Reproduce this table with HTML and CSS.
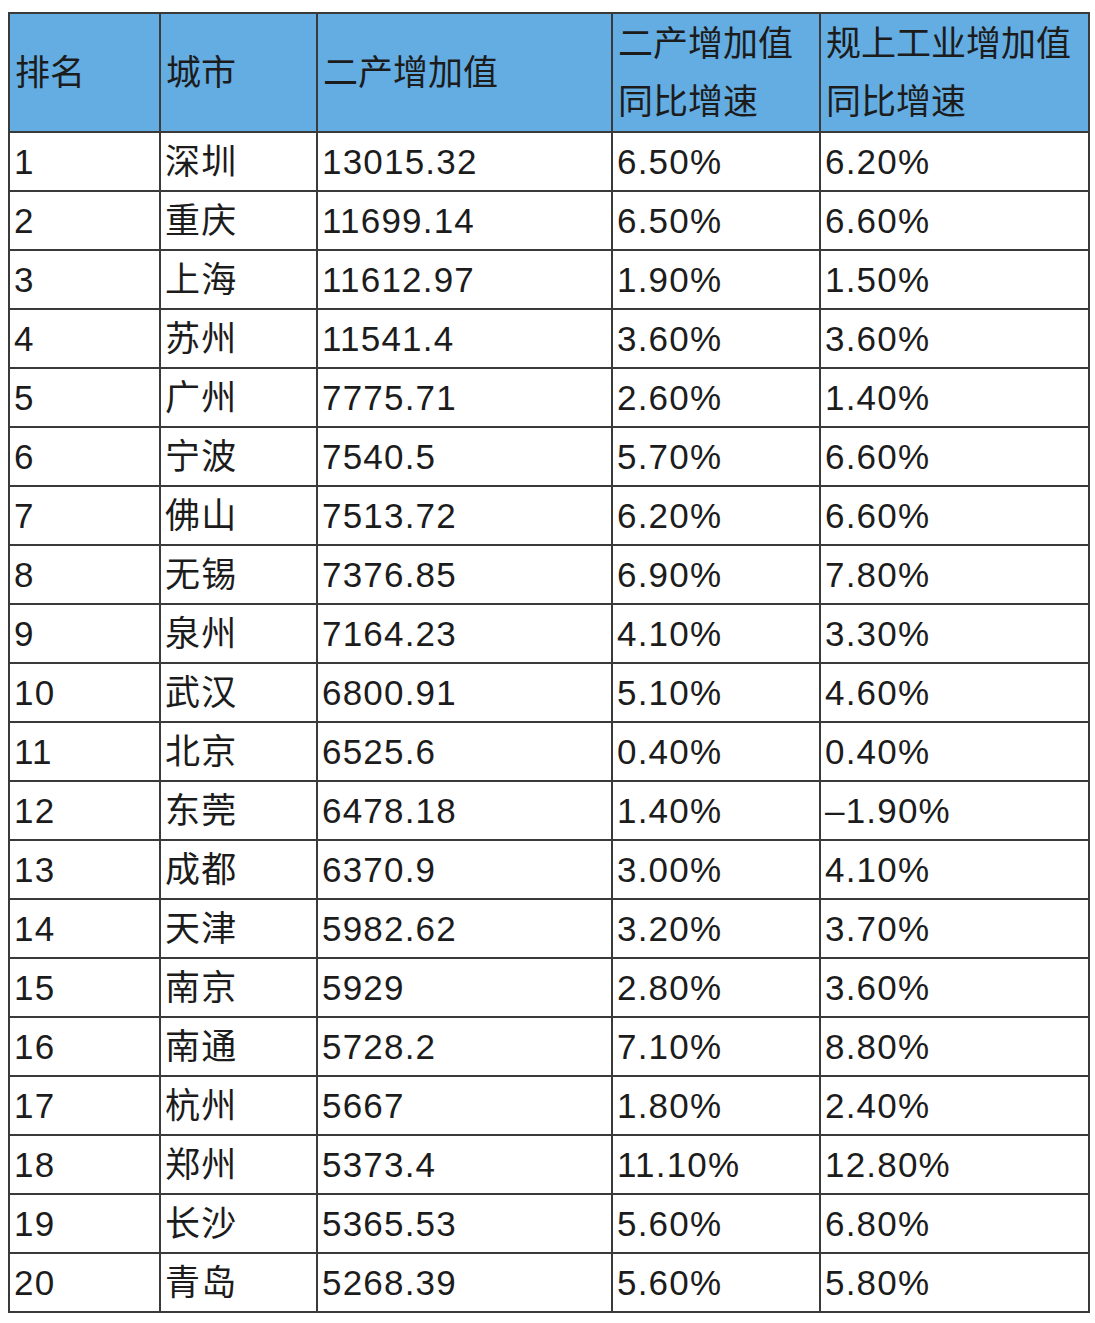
FILE: index.html
```html
<!DOCTYPE html>
<html lang="zh-CN">
<head>
<meta charset="utf-8">
<title>城市二产增加值排名</title>
<link rel="stylesheet" href="styles.css">
</head>
<body>
<table class="rank">
<colgroup>
<col class="c1"><col class="c2"><col class="c3"><col class="c4"><col class="c5">
</colgroup>
<thead>
<tr><th>排名</th><th>城市</th><th>二产增加值</th><th>二产增加值<br>同比增速</th><th>规上工业增加值<br>同比增速</th></tr>
</thead>
<tbody>
<tr><td>1</td><td>深圳</td><td>13015.32</td><td>6.50%</td><td>6.20%</td></tr>
<tr><td>2</td><td>重庆</td><td>11699.14</td><td>6.50%</td><td>6.60%</td></tr>
<tr><td>3</td><td>上海</td><td>11612.97</td><td>1.90%</td><td>1.50%</td></tr>
<tr><td>4</td><td>苏州</td><td>11541.4</td><td>3.60%</td><td>3.60%</td></tr>
<tr><td>5</td><td>广州</td><td>7775.71</td><td>2.60%</td><td>1.40%</td></tr>
<tr><td>6</td><td>宁波</td><td>7540.5</td><td>5.70%</td><td>6.60%</td></tr>
<tr><td>7</td><td>佛山</td><td>7513.72</td><td>6.20%</td><td>6.60%</td></tr>
<tr><td>8</td><td>无锡</td><td>7376.85</td><td>6.90%</td><td>7.80%</td></tr>
<tr><td>9</td><td>泉州</td><td>7164.23</td><td>4.10%</td><td>3.30%</td></tr>
<tr><td>10</td><td>武汉</td><td>6800.91</td><td>5.10%</td><td>4.60%</td></tr>
<tr><td>11</td><td>北京</td><td>6525.6</td><td>0.40%</td><td>0.40%</td></tr>
<tr><td>12</td><td>东莞</td><td>6478.18</td><td>1.40%</td><td>–1.90%</td></tr>
<tr><td>13</td><td>成都</td><td>6370.9</td><td>3.00%</td><td>4.10%</td></tr>
<tr><td>14</td><td>天津</td><td>5982.62</td><td>3.20%</td><td>3.70%</td></tr>
<tr><td>15</td><td>南京</td><td>5929</td><td>2.80%</td><td>3.60%</td></tr>
<tr><td>16</td><td>南通</td><td>5728.2</td><td>7.10%</td><td>8.80%</td></tr>
<tr><td>17</td><td>杭州</td><td>5667</td><td>1.80%</td><td>2.40%</td></tr>
<tr><td>18</td><td>郑州</td><td>5373.4</td><td>11.10%</td><td>12.80%</td></tr>
<tr><td>19</td><td>长沙</td><td>5365.53</td><td>5.60%</td><td>6.80%</td></tr>
<tr><td>20</td><td>青岛</td><td>5268.39</td><td>5.60%</td><td>5.80%</td></tr>
</tbody>
</table>
</body>
</html>
```
FILE: styles.css
```css
html, body {
  background: #ffffff;
}
body {
  margin: 12px 0 0 8px;
  font-family: "Liberation Sans", "Noto Sans CJK SC", sans-serif;
  color: #1c1c1c;
}
.rank {
  border-collapse: collapse;
  table-layout: fixed;
  width: 1080px;
  font-size: 35px;
}
.c1 { width: 151px; }
.c2 { width: 157px; }
.c3 { width: 295px; }
.c4 { width: 208px; }
.c5 { width: 269px; }
.rank th,
.rank td {
  border: 2px solid #3a3a3a;
  text-align: left;
  vertical-align: middle;
  padding: 0 4px;
  white-space: nowrap;
  overflow: hidden;
}
.rank th {
  background: #63ade3;
  font-weight: normal;
  height: 117px;
  line-height: 58px;
  padding-left: 5px;
}
.rank td {
  height: 57px;
  line-height: 57px;
  letter-spacing: 1.2px;
}
```
